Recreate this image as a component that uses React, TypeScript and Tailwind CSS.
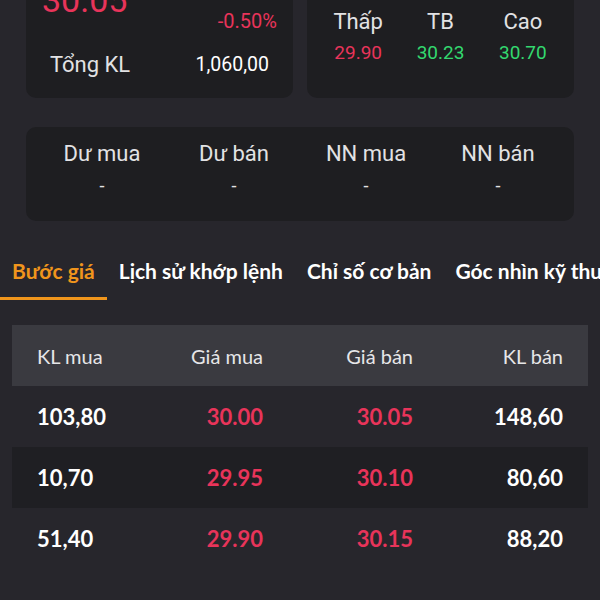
import React from "react";

const top = "font-['Roboto','Noto_Sans',sans-serif]";
const body = "font-['Lato','Noto_Sans',sans-serif]";

const stats = [
  { label: "Thấp", value: "29.90", color: "text-[#e8345a]" },
  { label: "TB", value: "30.23", color: "text-[#33d86f]" },
  { label: "Cao", value: "30.70", color: "text-[#33d86f]" },
];

const flows = ["Dư mua", "Dư bán", "NN mua", "NN bán"];

const tabs = ["Bước giá", "Lịch sử khớp lệnh", "Chỉ số cơ bản", "Góc nhìn kỹ thuật"];

const rows = [
  { kl: "103,80", buy: "30.00", sell: "30.05", klSell: "148,60" },
  { kl: "10,70", buy: "29.95", sell: "30.10", klSell: "80,60" },
  { kl: "51,40", buy: "29.90", sell: "30.15", klSell: "88,20" },
];

export default function App() {
  return (
    <div className="h-[600px] w-[600px] overflow-hidden bg-[#27262c]">
      <div className="-mt-[34px]">
        <div className={`grid grid-cols-2 gap-[14px] px-[26px] ${top}`}>
          <div className="rounded-[10px] bg-[#1e1e21] px-[16px] pb-[19px] pt-[14px]">
            <div className="flex items-start justify-between">
              <span className="text-[34px] leading-[40px] text-[#e8345a]">30.05</span>
              <span className="pt-[29px] text-[20px] leading-[24px] text-[#e8345a]">-0.50%</span>
            </div>
            <div className="mt-[18px] flex items-center justify-between pl-[8px] pr-[8px]">
              <span className="text-[22px] leading-[28px] text-[#e2e2e4]">Tổng KL</span>
              <span className="text-[19.5px] leading-[28px] text-white">1,060,00</span>
            </div>
          </div>
          <div className="rounded-[10px] bg-[#1e1e21] px-[10px] pt-[42px]">
            <div className="grid grid-cols-3 text-center">
              {stats.map((s) => (
                <div key={s.label} className="flex flex-col items-center">
                  <span className="text-[22px] leading-[28px] text-[#e2e2e4]">{s.label}</span>
                  <span className={`mt-[4px] text-[19px] leading-[26px] ${s.color}`}>{s.value}</span>
                </div>
              ))}
            </div>
          </div>
        </div>

        <div className={`mx-[26px] mt-[29px] rounded-[10px] bg-[#1e1e21] px-[10px] pb-[22px] pt-[13px] ${top}`}>
          <div className="grid grid-cols-4 text-center">
            {flows.map((f) => (
              <div key={f} className="flex flex-col items-center">
                <span className="text-[22px] leading-[28px] text-[#e2e2e4]">{f}</span>
                <span className="mt-[5px] text-[18px] leading-[26px] text-[#e2e2e4]">-</span>
              </div>
            ))}
          </div>
        </div>

        <div className={`mt-[36px] flex whitespace-nowrap ${body}`}>
          {tabs.map((t, i) => (
            <div
              key={t}
              className={`shrink-0 border-b-[3px] px-[12px] pb-[12px] text-[21px] font-bold leading-[28px] ${
                i === 0 ? "border-[#f0951c] text-[#f0951c]" : "border-transparent text-white"
              }`}
            >
              {t}
            </div>
          ))}
        </div>

        <div className={`mx-[12px] mt-[25px] ${body}`}>
          <div className="grid h-[61px] grid-cols-[1fr_150px_150px_150px] items-center bg-[#3a3a40] px-[25px] text-[20px] text-[#e6e6e8]">
            <span>KL mua</span>
            <span className="text-right">Giá mua</span>
            <span className="text-right">Giá bán</span>
            <span className="text-right">KL bán</span>
          </div>
          {rows.map((r, i) => (
            <div
              key={r.kl}
              className={`grid h-[61px] grid-cols-[1fr_150px_150px_150px] items-center px-[25px] text-[22px] font-bold ${
                i === 1 ? "bg-[#1f1f23]" : ""
              }`}
            >
              <span className="text-white">{r.kl}</span>
              <span className="text-right text-[#e8345a]">{r.buy}</span>
              <span className="text-right text-[#e8345a]">{r.sell}</span>
              <span className="text-right text-white">{r.klSell}</span>
            </div>
          ))}
        </div>
      </div>
    </div>
  );
}
